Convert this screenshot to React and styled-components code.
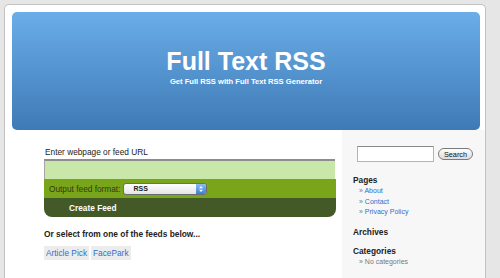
import styled, { createGlobalStyle } from "styled-components";

const GlobalStyle = createGlobalStyle`
  html, body {
    margin: 0;
    padding: 0;
    background: #e6e6e6;
    font-family: "Liberation Sans", Arial, sans-serif;
  }
`;

const Page = styled.div`
  margin: 4px 0 0 4px;
  width: 480px;
  height: 273px;
  background: #fff;
  border: 1px solid #c2c2c2;
  border-bottom: none;
  border-radius: 5px 5px 0 0;
  overflow: hidden;
`;

const Header = styled.div`
  margin: 7px 5px 0 7px;
  height: 118px;
  box-sizing: border-box;
  padding-top: 37px;
  border-radius: 5px;
  background: linear-gradient(#6aade8, #3e7ab6);
  display: flex;
  flex-direction: column;
  align-items: center;
  color: #fff;
`;

const Title = styled.h1`
  margin: 0;
  font-size: 25px;
  line-height: 25px;
  font-weight: bold;
`;

const Subtitle = styled.div`
  margin-top: 3px;
  font-size: 7.6px;
  line-height: 9px;
  font-weight: bold;
`;

const Body = styled.div`
  display: flex;
  height: 150px;
`;

const Main = styled.div`
  width: 337px;
  box-sizing: border-box;
  padding: 17px 0 0 39px;
`;

const Label = styled.div`
  font-size: 8.3px;
  line-height: 10px;
  color: #222;
  padding-left: 1px;
`;

const Form = styled.div`
  width: 292px;
  margin-top: 2px;
`;

const UrlInput = styled.div`
  height: 20px;
  width: 291px;
  box-sizing: border-box;
  background: #c9e7a8;
  border-top: 2px solid #8d8d8d;
  border-left: 1px solid #a5a5a5;
`;

const FormatRow = styled.div`
  height: 19px;
  background: #79a51a;
  display: flex;
  align-items: center;
  gap: 3px;
  padding-left: 5px;
  font-size: 8.3px;
  color: #2e3d12;
`;

const Select = styled.div`
  width: 84px;
  height: 12px;
  box-sizing: border-box;
  border: 1px solid #6d6d6d;
  border-radius: 3px;
  background: linear-gradient(#ffffff, #e4e4e4);
  display: flex;
  align-items: center;
  justify-content: space-between;
  padding-left: 9px;
  font-size: 7px;
  font-weight: bold;
  color: #222;
`;

const Stepper = styled.span`
  width: 10px;
  height: 10px;
  border-radius: 0 2px 2px 0;
  background: linear-gradient(#8bbcf0, #3d80d6);
  display: flex;
  align-items: center;
  justify-content: center;
`;

const SubmitRow = styled.div`
  height: 19px;
  background: #435a28;
  border-radius: 0 0 8px 8px;
  display: flex;
  align-items: center;
  padding-left: 25px;
  font-size: 8.3px;
  font-weight: bold;
  color: #fff;
`;

const SectionTitle = styled.div`
  margin-top: 12px;
  font-size: 8.4px;
  line-height: 10px;
  font-weight: bold;
  color: #222;
`;

const Feeds = styled.div`
  display: flex;
  gap: 2px;
  margin-top: 7px;
`;

const FeedChip = styled.span`
  height: 14px;
  padding: 0 2px;
  background: #ececec;
  display: flex;
  align-items: center;
  font-size: 8.3px;
  color: #2b6fd3;
`;

const Sidebar = styled.div`
  flex: 1;
  background: #f7f7f7;
  padding: 16px 0 0 11px;
`;

const SearchRow = styled.div`
  display: flex;
  align-items: center;
  gap: 4px;
  margin-left: 4px;
`;

const SearchInput = styled.div`
  width: 77px;
  height: 16px;
  box-sizing: border-box;
  background: #fff;
  border: 1px solid #b4b4b4;
  border-top-color: #8a8a8a;
`;

const SearchButton = styled.div`
  width: 35px;
  height: 12px;
  box-sizing: border-box;
  border: 1px solid #7a7a7a;
  border-radius: 7px;
  background: linear-gradient(#ffffff, #dcdcdc);
  display: flex;
  align-items: center;
  justify-content: center;
  font-size: 7.3px;
  color: #111;
`;

const WidgetTitle = styled.div`
  margin-top: ${({ $top }) => $top}px;
  font-size: 8.3px;
  line-height: 10px;
  font-weight: bold;
  color: #222;
`;

const List = styled.ul`
  list-style: none;
  margin: 1px 0 0;
  padding-left: 6px;
`;

const Item = styled.li`
  font-size: 7px;
  line-height: 10.5px;
  color: ${({ $muted }) => ($muted ? "#777" : "#2b6fd3")};

  &::before {
    content: "» ";
    color: #777;
  }
`;

const Arrows = () => (
  <svg width="6" height="8" viewBox="0 0 6 8">
    <path d="M1 3.2 L3 1 L5 3.2 Z" fill="#fff" />
    <path d="M1 4.8 L3 7 L5 4.8 Z" fill="#fff" />
  </svg>
);

export default function App() {
  return (
    <>
      <GlobalStyle />
      <Page>
        <Header>
          <Title>Full Text RSS</Title>
          <Subtitle>Get Full RSS with Full Text RSS Generator</Subtitle>
        </Header>
        <Body>
          <Main>
            <Label>Enter webpage or feed URL</Label>
            <Form>
              <UrlInput />
              <FormatRow>
                Output feed format:
                <Select>
                  RSS
                  <Stepper>
                    <Arrows />
                  </Stepper>
                </Select>
              </FormatRow>
              <SubmitRow>Create Feed</SubmitRow>
            </Form>
            <SectionTitle>Or select from one of the feeds below...</SectionTitle>
            <Feeds>
              <FeedChip>Article Pick</FeedChip>
              <FeedChip>FacePark</FeedChip>
            </Feeds>
          </Main>
          <Sidebar>
            <SearchRow>
              <SearchInput />
              <SearchButton>Search</SearchButton>
            </SearchRow>
            <WidgetTitle $top={13}>Pages</WidgetTitle>
            <List>
              <Item>About</Item>
              <Item>Contact</Item>
              <Item>Privacy Policy</Item>
            </List>
            <WidgetTitle $top={9}>Archives</WidgetTitle>
            <WidgetTitle $top={9}>Categories</WidgetTitle>
            <List>
              <Item $muted>No categories</Item>
            </List>
          </Sidebar>
        </Body>
      </Page>
    </>
  );
}
